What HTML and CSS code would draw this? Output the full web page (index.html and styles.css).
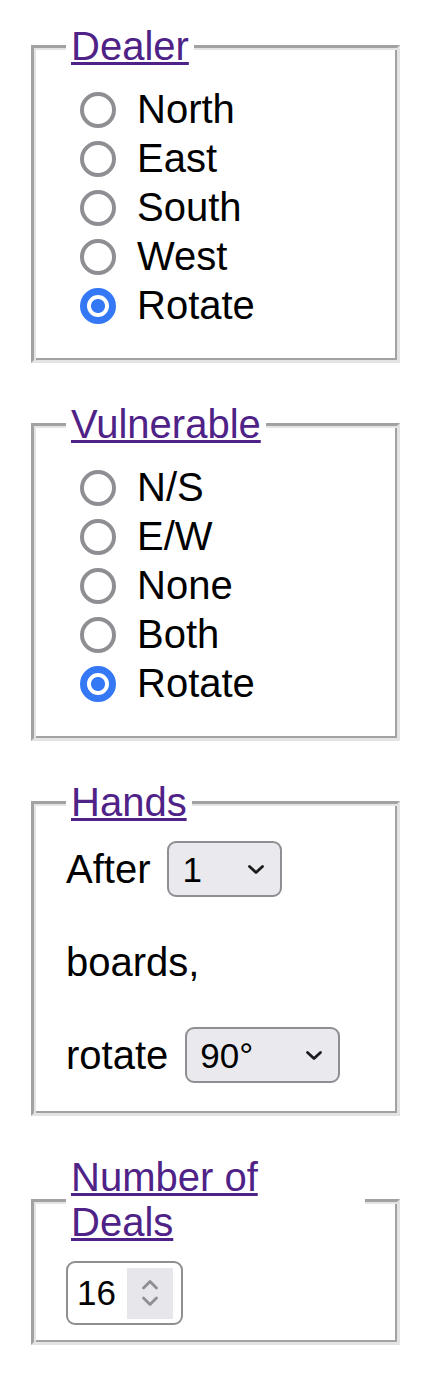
FILE: index.html
```html
<!DOCTYPE html>
<html lang="en">
<head>
  <meta charset="UTF-8">
  <title>Deal Options</title>
  <link rel="stylesheet" href="styles.css">
</head>
<body>

<form class="settings">

  <fieldset class="group">
    <legend><a href="#dealer">Dealer</a></legend>
    <label class="option"><input type="radio" name="dealer" value="N">North</label>
    <label class="option"><input type="radio" name="dealer" value="E">East</label>
    <label class="option"><input type="radio" name="dealer" value="S">South</label>
    <label class="option"><input type="radio" name="dealer" value="W">West</label>
    <label class="option"><input type="radio" name="dealer" value="R" checked>Rotate</label>
  </fieldset>

  <fieldset class="group">
    <legend><a href="#vulnerable">Vulnerable</a></legend>
    <label class="option"><input type="radio" name="vul" value="NS">N/S</label>
    <label class="option"><input type="radio" name="vul" value="EW">E/W</label>
    <label class="option"><input type="radio" name="vul" value="None">None</label>
    <label class="option"><input type="radio" name="vul" value="Both">Both</label>
    <label class="option"><input type="radio" name="vul" value="R" checked>Rotate</label>
  </fieldset>

  <fieldset class="group">
    <legend><a href="#hands">Hands</a></legend>
    <div class="line">
      <span>After</span>
      <span class="pick pick-short">
        <select name="after">
          <option selected>1</option>
          <option>2</option>
          <option>4</option>
          <option>8</option>
        </select>
        <svg class="chev" viewBox="0 0 18 11" width="18" height="11"><path d="M2.5 2.5 L9 8.5 L15.5 2.5" fill="none" stroke="#1c1c1e" stroke-width="2.8" stroke-linecap="round" stroke-linejoin="round"/></svg>
      </span>
    </div>
    <div class="line">boards,</div>
    <div class="line">
      <span>rotate</span>
      <span class="pick pick-wide">
        <select name="rotate">
          <option selected>90°</option>
          <option>180°</option>
          <option>270°</option>
        </select>
        <svg class="chev" viewBox="0 0 18 11" width="18" height="11"><path d="M2.5 2.5 L9 8.5 L15.5 2.5" fill="none" stroke="#1c1c1e" stroke-width="2.8" stroke-linecap="round" stroke-linejoin="round"/></svg>
      </span>
    </div>
  </fieldset>

  <fieldset class="group group-tight">
    <legend><a href="#deals">Number of Deals</a></legend>
    <span class="num">
      <input type="text" name="deals" value="16">
      <span class="spin">
        <svg viewBox="0 0 18 38" width="18" height="38">
          <path d="M2.5 14 L9 7.5 L15.5 14" fill="none" stroke="#8e8e93" stroke-width="2.8" stroke-linecap="round" stroke-linejoin="round"/>
          <path d="M2.5 24 L9 30.5 L15.5 24" fill="none" stroke="#8e8e93" stroke-width="2.8" stroke-linecap="round" stroke-linejoin="round"/>
        </svg>
      </span>
    </span>
  </fieldset>

</form>

</body>
</html>
```

FILE: styles.css
```css
body {
  margin: 0;
  padding: 24px 22px 40px 31px;
  font-family: "Liberation Sans", Arial, Helvetica, sans-serif;
  font-size: 40px;
  color: #000;
  background: #fff;
}

.group {
  margin: 0 0 39px;
  padding: 16px 32px 30px;
  border: 3px solid;
  border-color: #a2a2a2 #e4e4e4 #e4e4e4 #a2a2a2;
  box-shadow: inset 2px 2px 0 #e4e4e4, inset -2px -2px 0 #a2a2a2;
}

.group-tight {
  padding-bottom: 17px;
}

legend {
  padding: 0 5px;
  background: #fff;
  line-height: normal;
}

legend a {
  color: #4f2287;
  text-decoration-thickness: 3px;
}

/* radio rows */
.option {
  display: flex;
  align-items: center;
  height: 49px;
}

.option input {
  appearance: none;
  -webkit-appearance: none;
  box-sizing: border-box;
  width: 36px;
  height: 36px;
  margin: 0 21px 0 14px;
  border: 4px solid #8e8e93;
  border-radius: 50%;
  background: #fff;
}

.option input:checked {
  border: 7px solid #3478f6;
  background: radial-gradient(circle, #3478f6 0 6.5px, #fff 7.5px);
}

/* hands */
.line {
  display: flex;
  align-items: center;
  gap: 17px;
  height: 56px;
  margin-bottom: 37px;
}

.line:last-child {
  margin-bottom: 0;
}

.pick {
  position: relative;
  display: inline-block;
}

.pick select {
  appearance: none;
  -webkit-appearance: none;
  box-sizing: border-box;
  height: 56px;
  padding: 0 0 0 13px;
  border: 2px solid #8e8e93;
  border-radius: 9px;
  background: #e9e9ee;
  font-family: inherit;
  font-size: 35px;
  color: #000;
}

.pick-short select {
  width: 115px;
}

.pick-wide select {
  width: 155px;
}

.chev {
  position: absolute;
  right: 17px;
  top: 23px;
  pointer-events: none;
}

/* number of deals */
.num {
  display: inline-flex;
  align-items: center;
  box-sizing: border-box;
  width: 117px;
  height: 64px;
  padding: 0 8px 0 9px;
  border: 2px solid #8e8e93;
  border-radius: 9px;
  background: #fff;
}

.num input {
  width: 50px;
  padding: 0;
  border: 0;
  outline: none;
  font-family: inherit;
  font-size: 35px;
  color: #000;
  background: transparent;
}

.spin {
  display: flex;
  align-items: center;
  justify-content: center;
  width: 46px;
  height: 51px;
  margin-left: auto;
  background: #e6e6eb;
}
```
